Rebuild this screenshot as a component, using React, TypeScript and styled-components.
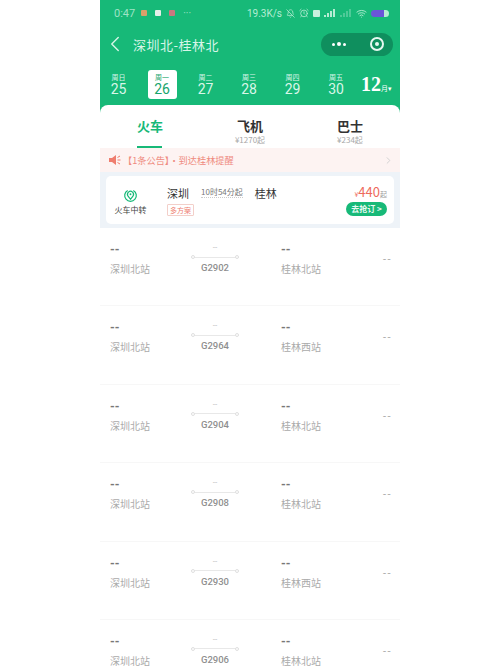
import React from 'react';
import styled, { createGlobalStyle } from 'styled-components';
import { ChevronLeft, ChevronRight, Wifi, AlarmClock, BellOff } from 'lucide-react';

const Global = createGlobalStyle`
   html, body { margin: 0; padding: 0; background: #fff; }
   body { font-family: "Noto Sans CJK SC", "Noto Sans", sans-serif; }
`;

const Page = styled.div`
   width: 500px;
   height: 666px;
   display: flex;
   justify-content: center;
   overflow: hidden;
`;

const Phone = styled.div`
   width: 300px;
   height: 666px;
   background: #17b978;
   display: flex;
   flex-direction: column;
   overflow: hidden;
`;

const StatusBar = styled.div`
   height: 26px;
   padding: 0 11px 0 14px;
   display: flex;
   align-items: center;
   color: #9fe3c6;
   font-size: 10px;
   font-family: Roboto, sans-serif;
   flex-shrink: 0;
`;

const Clock = styled.span`
   font-size: 11px;
   margin-right: 6px;
`;

const Dot = styled.span<{ $color: string }>`
   width: 6px;
   height: 6px;
   border-radius: 1px;
   background: ${p => p.$color};
   margin-right: 8px;
`;

const StatusRight = styled.div`
   margin-left: auto;
   display: flex;
   align-items: center;
   gap: 4px;
   color: #b5ecd3;
`;

const HdBox = styled.span`
   width: 7px;
   height: 7px;
   border-radius: 1px;
   background: #c8f0de;
`;

const Battery = styled.span`
   width: 18px;
   height: 7px;
   border-radius: 4px;
   background: linear-gradient(90deg, #6a55d8 0 70%, #b5ecd3 70%);
`;

const Nav = styled.div`
   height: 34px;
   box-sizing: border-box;
   padding: 2px 7px 0 2px;
   display: flex;
   align-items: center;
   color: #d8f5e8;
   flex-shrink: 0;
`;

const Title = styled.div`
   font-size: 13px;
   margin-left: 5px;
   letter-spacing: 0.5px;
`;

const Capsule = styled.div`
   margin-left: auto;
   width: 72px;
   height: 23px;
   border-radius: 12px;
   background: #0f8f5e;
   display: flex;
   align-items: center;
   justify-content: space-between;
   padding: 0 9px 0 11px;
   box-sizing: border-box;
`;

const CapsuleDots = styled.span`
   display: flex;
   align-items: center;
   gap: 2px;
`;

const CapsuleDot = styled.i<{ $big?: boolean }>`
   width: ${p => (p.$big ? 4 : 3)}px;
   height: ${p => (p.$big ? 4 : 3)}px;
   border-radius: 50%;
   background: #fff;
`;

const Target = styled.span`
   width: 14px;
   height: 14px;
   border: 2px solid #e6f8f0;
   border-radius: 50%;
   box-sizing: border-box;
   display: flex;
   align-items: center;
   justify-content: center;
   &::after {
      content: '';
      width: 4px;
      height: 4px;
      border-radius: 50%;
      background: #e6f8f0;
   }
`;

const Dates = styled.div`
   height: 45px;
   padding: 10px 3px 0 4px;
   display: flex;
   align-items: flex-start;
   box-sizing: border-box;
   flex-shrink: 0;
`;

const DateCell = styled.div<{ $active?: boolean }>`
   width: 29px;
   height: 29px;
   margin-right: 14.5px;
   border-radius: 3px;
   background: ${p => (p.$active ? '#fff' : 'transparent')};
   color: ${p => (p.$active ? '#17a56c' : '#d9f6e9')};
   display: flex;
   flex-direction: column;
   align-items: center;
   justify-content: center;
`;

const Week = styled.span`
   font-size: 7px;
   line-height: 9px;
`;

const Day = styled.span`
   font-size: 14px;
   line-height: 15px;
   font-family: Roboto, sans-serif;
`;

const Month = styled.div`
   margin-left: -4px;
   color: #fff;
   font-size: 7px;
   white-space: nowrap;
   display: flex;
   align-items: baseline;
   b {
      font-size: 20px;
      line-height: 29px;
      font-family: "Liberation Serif", serif;
   }
`;

const Sheet = styled.div`
   flex: 1;
   background: #fff;
   border-radius: 8px 8px 0 0;
   display: flex;
   flex-direction: column;
   min-height: 0;
`;

const Handle = styled.div`
   width: 24px;
   height: 2px;
   margin: 4px auto 0;
   background: #b9b9b9;
   border-radius: 1px;
`;

const Tabs = styled.div`
   height: 39px;
   display: flex;
   flex-shrink: 0;
`;

const Tab = styled.div<{ $active?: boolean }>`
   flex: 1;
   position: relative;
   text-align: center;
   padding-top: 8px;
   color: ${p => (p.$active ? '#17b978' : '#333')};
   font-size: 13px;
   line-height: 18px;
   font-weight: 700;
   &::after {
      content: '';
      display: ${p => (p.$active ? 'block' : 'none')};
      position: absolute;
      left: 37px;
      bottom: 0;
      width: 25px;
      height: 2px;
      background: #17b978;
   }
`;

const TabPrice = styled.div`
   font-size: 8px;
   line-height: 9px;
   font-weight: 400;
   color: #a8a8a8;
`;

const Notice = styled.div`
   height: 24px;
   padding: 0 6px 0 9px;
   background: #fdf3f2;
   color: #ef8a7e;
   font-size: 9.2px;
   display: flex;
   align-items: center;
   gap: 2px;
   flex-shrink: 0;
   svg:last-child {
      margin-left: auto;
      color: #cfcfcf;
   }
`;

const Promo = styled.div`
   height: 56px;
   padding: 4px 6px;
   box-sizing: border-box;
   background: #eef3f8;
   flex-shrink: 0;
`;

const PromoCard = styled.div`
   height: 48px;
   background: #fff;
   border-radius: 5px;
   display: flex;
   align-items: center;
`;

const Transfer = styled.div`
   width: 49px;
   display: flex;
   flex-direction: column;
   align-items: center;
   font-size: 8px;
   line-height: 11px;
   color: #444;
   white-space: nowrap;
   gap: 1px;
   margin-top: 2px;
`;

const Route = styled.div`
   margin-left: 12px;
   display: flex;
   flex-direction: column;
   gap: 3px;
`;

const RouteLine = styled.div`
   display: flex;
   align-items: center;
   font-size: 11px;
   line-height: 16px;
   color: #333;
`;

const Duration = styled.span`
   font-size: 8px;
   color: #777;
   margin: 0 12px;
   border-bottom: 1px dotted #ccc;
   line-height: 10px;
`;

const Multi = styled.span`
   align-self: flex-start;
   font-size: 7px;
   line-height: 10px;
   padding: 0 2px;
   color: #ee7d6e;
   border: 1px solid #f3cfc9;
   border-radius: 1px;
`;

const Buy = styled.div`
   margin-left: auto;
   margin-right: 7px;
   display: flex;
   flex-direction: column;
   align-items: flex-end;
   gap: 1px;
`;

const Price = styled.div`
   color: #ee6a5c;
   font-size: 13px;
   line-height: 14px;
   small {
      font-size: 7px;
   }
   small:last-child {
      color: #999;
   }
`;

const BuyButton = styled.div`
   height: 14px;
   width: 41px;
   border-radius: 7px;
   background: #17b978;
   color: #eafaf3;
   font-size: 8px;
   line-height: 14px;
   font-weight: 700;
   text-align: center;
   white-space: nowrap;
`;

const Row = styled.div`
   height: 78.4px;
   box-sizing: border-box;
   flex-shrink: 0;
   padding: 15px 8px 0 10px;
   border-bottom: 1px solid #f7f7f7;
   display: grid;
   grid-template-columns: 81px 48px 1fr auto;
   align-items: start;
`;

const Side = styled.div<{ $arrive?: boolean }>`
   padding-left: ${p => (p.$arrive ? 42 : 0)}px;
   font-size: 10px;
   line-height: 14px;
   color: #aaa;
   white-space: nowrap;
`;

const Dash = styled.div`
   font-size: 12px;
   line-height: 15px;
   font-weight: 700;
   color: #777;
   margin-bottom: 4px;
   font-family: Roboto, sans-serif;
`;

const Middle = styled.div`
   display: flex;
   flex-direction: column;
   align-items: center;
   color: #999;
   font-family: Roboto, sans-serif;
`;

const TinyDash = styled.span`
   font-size: 8px;
   line-height: 9px;
   color: #bbb;
`;

const TrainLine = styled.div`
   width: 100%;
   height: 4px;
   margin: 3px 0 3px;
   box-sizing: border-box;
   border-radius: 2px;
   background: linear-gradient(#e8e8e8, #e8e8e8) center / 100% 1px no-repeat;
   position: relative;
   &::before,
   &::after {
      content: '';
      position: absolute;
      top: 0;
      width: 4px;
      height: 4px;
      box-sizing: border-box;
      border: 1px solid #e0e0e0;
      border-radius: 50%;
      background: #fff;
   }
   &::before {
      left: 0;
   }
   &::after {
      right: 0;
   }
`;

const TrainNo = styled.span`
   font-size: 9.5px;
   line-height: 12px;
   font-weight: 500;
   color: #8f8f8f;
`;

const RowPrice = styled.div`
   margin-top: 11px;
   font-size: 11px;
   line-height: 12px;
   color: #aaa;
   font-family: Roboto, sans-serif;
   letter-spacing: 1.5px;
`;

const days = [
   ['周日', '25'],
   ['周一', '26'],
   ['周二', '27'],
   ['周三', '28'],
   ['周四', '29'],
   ['周五', '30'],
];

const trains = [
   ['G2902', '桂林北站'],
   ['G2964', '桂林西站'],
   ['G2904', '桂林北站'],
   ['G2908', '桂林北站'],
   ['G2930', '桂林西站'],
   ['G2906', '桂林北站'],
];

function Signal({ level }: { level: number }) {
   return (
      <svg width="12" height="8" viewBox="0 0 12 8" fill="currentColor">
         {[0, 1, 2, 3].map(i => (
            <rect key={i} x={i * 3} y={6 - i * 2} width="2" height={2 + i * 2} opacity={i < level ? 1 : 0.35} />
         ))}
      </svg>
   );
}

export default function App() {
   return (
      <Page>
         <Global />
         <Phone>
            <StatusBar>
               <Clock>0:47</Clock>
               <Dot $color="#d9a06a" />
               <Dot $color="#e6efe9" />
               <Dot $color="#c9787f" />
               <span>···</span>
               <StatusRight>
                  19.3K/s
                  <BellOff size={9} />
                  <AlarmClock size={10} />
                  <HdBox />
                  <Signal level={4} />
                  <Signal level={0} />
                  <Wifi size={11} />
                  <Battery />
               </StatusRight>
            </StatusBar>
            <Nav>
               <ChevronLeft size={26} strokeWidth={1.3} />
               <Title>深圳北-桂林北</Title>
               <Capsule>
                  <CapsuleDots>
                     <CapsuleDot />
                     <CapsuleDot $big />
                     <CapsuleDot />
                  </CapsuleDots>
                  <Target />
               </Capsule>
            </Nav>
            <Dates>
               {days.map(([week, day]) => (
                  <DateCell key={day} $active={day === '26'}>
                     <Week>{week}</Week>
                     <Day>{day}</Day>
                  </DateCell>
               ))}
               <Month>
                  <b>12</b>月▾
               </Month>
            </Dates>
            <Sheet>
               <Handle />
               <Tabs>
                  <Tab $active>火车</Tab>
                  <Tab>
                     飞机
                     <TabPrice>¥1270起</TabPrice>
                  </Tab>
                  <Tab>
                     巴士
                     <TabPrice>¥234起</TabPrice>
                  </Tab>
               </Tabs>
               <Notice>
                  <svg width="12" height="10" viewBox="0 0 12 10" fill="#ef7d6e">
                     <path d="M0 3h3l4-3v10L3 7H0Z" />
                     <path d="M8.5 2.5 11 1M8.5 5H11.500M8.500 7.500 11 9" stroke="#ef7d6e" fill="none" />
                  </svg>
                  【1条公告】・到达桂林提醒
                  <ChevronRight size={11} />
               </Notice>
               <Promo>
                  <PromoCard>
                     <Transfer>
                        <svg width="15" height="15" viewBox="0 0 16 16" fill="none" stroke="#17b978">
                           <path d="M5 2.600a6.200 6.200 0 1 0 6 0" strokeWidth="1.300" />
                           <path d="M8 12 5.400 8.600a3.200 3.200 0 1 1 5.200 0Z" strokeWidth="1.300" />
                           <circle cx="8" cy="6.600" r="1" fill="#17b978" stroke="none" />
                        </svg>
                        火车中转
                     </Transfer>
                     <Route>
                        <RouteLine>
                           深圳<Duration>10时54分起</Duration>桂林
                        </RouteLine>
                        <Multi>多方案</Multi>
                     </Route>
                     <Buy>
                        <Price>
                           <small>¥</small>440<small>起</small>
                        </Price>
                        <BuyButton>去抢订 &gt;</BuyButton>
                     </Buy>
                  </PromoCard>
               </Promo>
               {trains.map(([no, station]) => (
                  <Row key={no}>
                     <Side>
                        <Dash>--</Dash>
                        深圳北站
                     </Side>
                     <Middle>
                        <TinyDash>--</TinyDash>
                        <TrainLine />
                        <TrainNo>{no}</TrainNo>
                     </Middle>
                     <Side $arrive>
                        <Dash>--</Dash>
                        {station}
                     </Side>
                     <RowPrice>--</RowPrice>
                  </Row>
               ))}
            </Sheet>
         </Phone>
      </Page>
   );
}
